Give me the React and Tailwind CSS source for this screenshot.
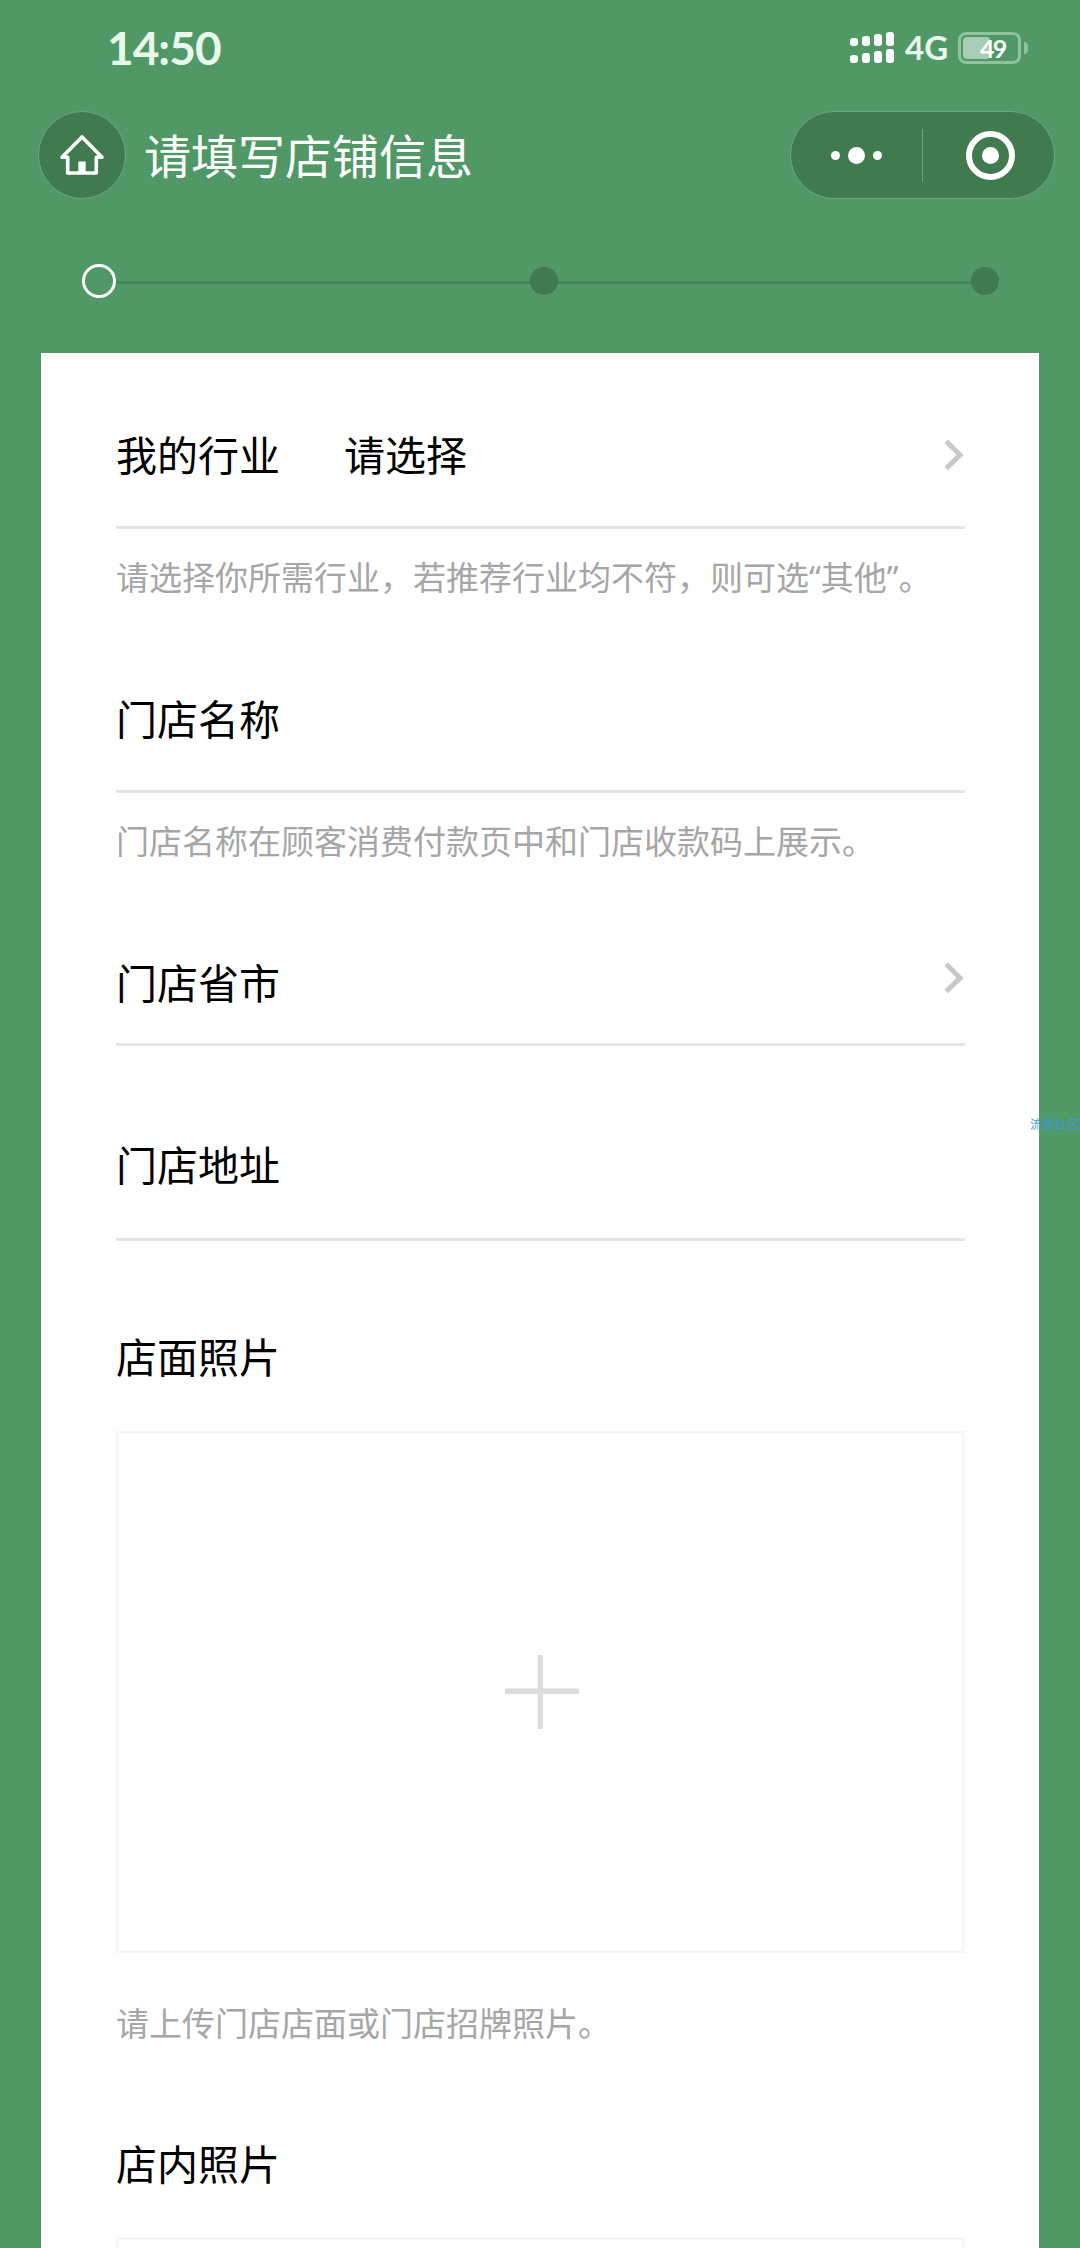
const Chevron = ({ className }) => (
  <svg className={className} width="22" height="34" viewBox="0 0 22 34" fill="none" stroke="#c8c8cb" strokeWidth="5">
    <path d="M3.2 3.3 L17.1 16.9 L3.2 30.5" />
  </svg>
);

const Hint = ({ children, className = "h-[98px] pb-[4px]" }) => (
  <div className={`flex items-center text-[33px] leading-none text-[#a6a6a6] ${className}`}>
    <p className="whitespace-nowrap">{children}</p>
  </div>
);

const Quote = ({ children }) => <span className="font-['Noto_Sans']">{children}</span>;

const Field = ({ label, value, className, chevron }) => (
  <div className={`flex items-center border-b-[3px] border-[#e5e5e5] text-[41px] leading-none text-black ${className}`}>
    <span className="w-[228px]">{label}</span>
    <span className="flex-1">{value}</span>
    {chevron && <Chevron className={chevron} />}
  </div>
);

const signalHeights = ["h-[8px]", "h-[10px]", "h-[12px]", "h-[14px]"];

const SignalRow = () => (
  <div className="flex h-[14px] items-end gap-[4px]">
    {signalHeights.map((h) => (
      <i key={h} className={`w-[8px] rounded-[3px] bg-white ${h}`} />
    ))}
  </div>
);

function StatusBar() {
  return (
    <div className="flex h-[95px] items-center justify-between pl-[107px] pr-[52px] text-[#e9f8ec]">
      <span className="font-[Lato] text-[46px] font-bold leading-none tracking-[-1px]">14:50</span>
      <div className="flex items-center">
        <div className="flex flex-col gap-[3px]">
          <SignalRow />
          <SignalRow />
        </div>
        <span className="ml-[11px] w-[53px] font-[Lato] text-[33px] font-bold leading-none">4G</span>
        <div className="relative flex h-[32px] w-[63px] items-center rounded-[8px] border-[3px] border-[#90c29c] p-[2px]">
          <div className="h-[22px] w-[27px] rounded-[4px] bg-[#a9cdb2]" />
          <span className="absolute left-[19px] top-0 font-[Lato] text-[25px] font-bold leading-[26px] tracking-[-1.8px] text-white">49</span>
        </div>
        <div className="ml-[3px] h-[12px] w-[4px] rounded-r-full bg-[#90c29c]" />
      </div>
    </div>
  );
}

function NavBar() {
  return (
    <div className="mt-[16px] flex h-[88px] items-center pl-[38px] pr-[25px]">
      <div className="flex size-[88px] items-center justify-center rounded-full border border-[#6ba87b] bg-[#407a4e]">
        <svg width="46" height="42" viewBox="0 0 46 42" fill="none" stroke="#fff" strokeWidth="3.6" strokeLinejoin="round">
          <path d="M23 3 L3 23.2 H8.7 V39 H37.3 V23.2 H43 Z" />
          <path d="M19.3 27.5 H26.7 V39 H19.3 Z" fill="#fff" stroke="none" />
        </svg>
      </div>
      <h1 className="mb-[3px] ml-[18px] flex-1 text-[47px] leading-[60px] text-white">请填写店铺信息</h1>
      <div className="flex h-[88px] w-[265px] items-center rounded-full border border-[#6ba87b] bg-[#407a4e]">
        <div className="flex w-[131px] items-center justify-center gap-[8px]">
          <i className="size-[9px] rounded-full bg-white" />
          <i className="size-[17px] rounded-full bg-white" />
          <i className="size-[9px] rounded-full bg-white" />
        </div>
        <div className="h-[53px] w-px bg-[#6ba87b]" />
        <div className="ml-[43px] flex size-[49px] items-center justify-center rounded-full border-[6px] border-white">
          <i className="size-[17px] rounded-full bg-white" />
        </div>
      </div>
    </div>
  );
}

function Steps() {
  return (
    <div className="mt-[65px] flex h-[34px] items-center pl-[82px] pr-[81px]">
      <i className="size-[34px] rounded-full border-[3px] border-white" />
      <div className="mt-[2px] h-[3px] flex-1 bg-[#458759]" />
      <i className="size-[28px] rounded-full bg-[#407a4e]" />
      <div className="mt-[2px] h-[3px] flex-1 bg-[#458759]" />
      <i className="size-[28px] rounded-full bg-[#407a4e]" />
    </div>
  );
}

export default function App() {
  return (
    <div className="relative h-[2248px] w-[1080px] overflow-hidden bg-[#509865] font-['Noto_Sans_CJK_SC',sans-serif]">
      <StatusBar />
      <NavBar />
      <Steps />
      <main className="ml-[41px] mt-[55px] h-[1895px] w-[998px] bg-white pl-[75px] pr-[74px]">
        <Field label="我的行业" value="请选择" className="h-[176px] pt-[27px]" chevron="mt-[4px]" />
        <Hint className="h-[98px] pb-[2px]">请选择你所需行业，若推荐行业均不符，则可选<Quote>“</Quote>其他<Quote>”</Quote>。</Hint>
        <Field label="门店名称" className="h-[166px] pt-[17px]" />
        <Hint>门店名称在顾客消费付款页中和门店收款码上展示。</Hint>
        <Field label="门店省市" className="h-[155px] pt-[28px]" chevron="mb-[7px]" />
        <Field label="门店地址" className="h-[195px] pt-[43px]" />
        <h2 className="flex h-[190px] items-center pt-[38px] text-[41px] leading-none text-black">店面照片</h2>
        <div className="flex h-[522px] items-center justify-center border-[3px] border-[#f6f6f6]">
          <svg width="76" height="76" viewBox="0 0 76 76" stroke="#dcdcdc" strokeWidth="5.5">
            <path d="M2 37.3 H76 M37.3 1 V75" />
          </svg>
        </div>
        <Hint className="h-[143px] pb-[4px]">请上传门店店面或门店招牌照片。</Hint>
        <h2 className="flex h-[141px] items-center pb-[9px] text-[41px] leading-none text-black">店内照片</h2>
        <div className="h-[11px] border-x-[3px] border-t-[3px] border-[#f6f6f6]" />
      </main>
      <span className="absolute left-[1030px] top-[1117px] whitespace-nowrap text-[12.4px] leading-[14px] text-[#3f97dc]">流星社区</span>
    </div>
  );
}
